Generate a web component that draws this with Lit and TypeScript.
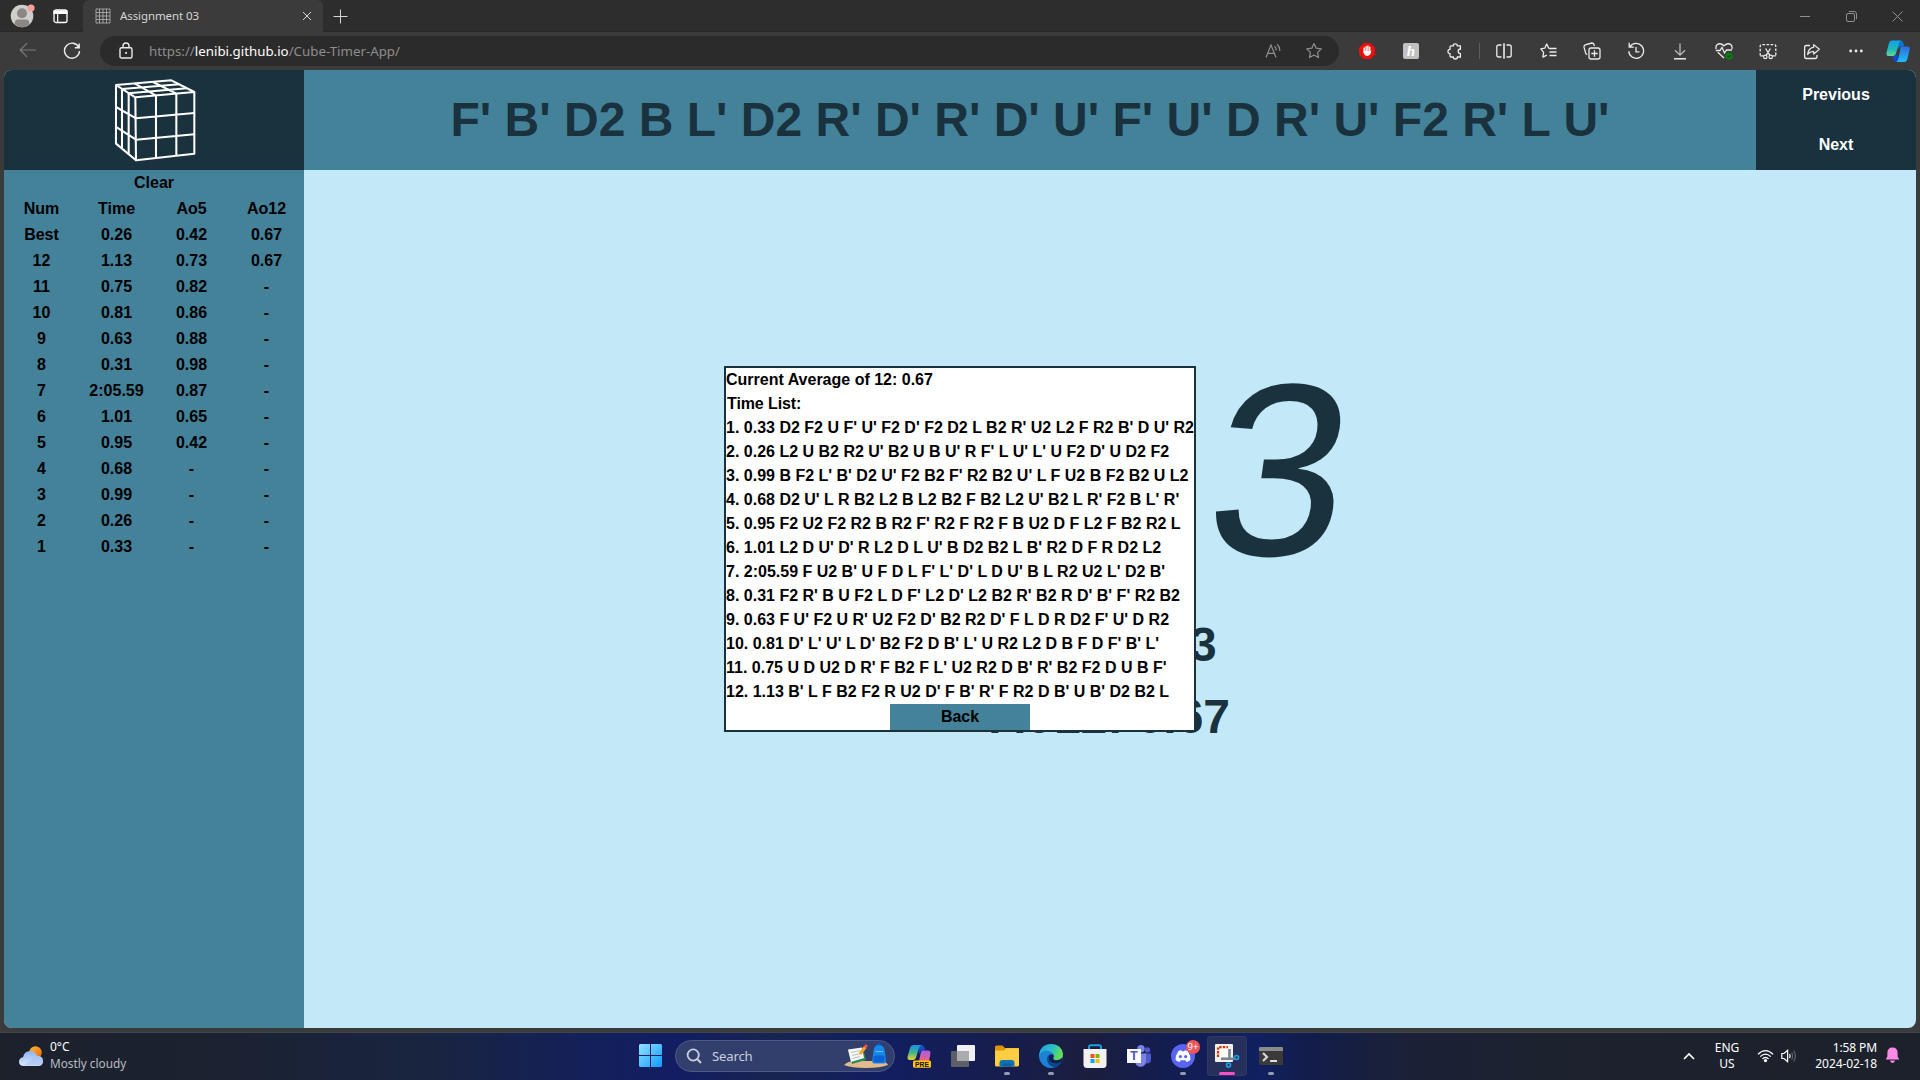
import { LitElement, html, css, svg } from "lit";
import { customElement } from "lit/decorators.js";

const SCRAMBLE = "F' B' D2 B L' D2 R' D' R' D' U' F' U' D R' U' F2 R' L U'";

const ROWS: string[][] = [
  ["Num", "Time", "Ao5", "Ao12"],
  ["Best", "0.26", "0.42", "0.67"],
  ["12", "1.13", "0.73", "0.67"],
  ["11", "0.75", "0.82", "-"],
  ["10", "0.81", "0.86", "-"],
  ["9", "0.63", "0.88", "-"],
  ["8", "0.31", "0.98", "-"],
  ["7", "2:05.59", "0.87", "-"],
  ["6", "1.01", "0.65", "-"],
  ["5", "0.95", "0.42", "-"],
  ["4", "0.68", "-", "-"],
  ["3", "0.99", "-", "-"],
  ["2", "0.26", "-", "-"],
  ["1", "0.33", "-", "-"],
];

const SOLVES: string[] = [
  "1. 0.33 D2 F2 U F' U' F2 D' F2 D2 L B2 R' U2 L2 F R2 B' D U' R2",
  "2. 0.26 L2 U B2 R2 U' B2 U B U' R F' L U' L' U F2 D' U D2 F2",
  "3. 0.99 B F2 L' B' D2 U' F2 B2 F' R2 B2 U' L F U2 B F2 B2 U L2",
  "4. 0.68 D2 U' L R B2 L2 B L2 B2 F B2 L2 U' B2 L R' F2 B L' R'",
  "5. 0.95 F2 U2 F2 R2 B R2 F' R2 F R2 F B U2 D F L2 F B2 R2 L",
  "6. 1.01 L2 D U' D' R L2 D L U' B D2 B2 L B' R2 D F R D2 L2",
  "7. 2:05.59 F U2 B' U F D L F' L' D' L D U' B L R2 U2 L' D2 B'",
  "8. 0.31 F2 R' B U F2 L D F' L2 D' L2 B2 R' B2 R D' B' F' R2 B2",
  "9. 0.63 F U' F2 U R' U2 F2 D' B2 R2 D' F L D R D2 F' U' D R2",
  "10. 0.81 D' L' U' L D' B2 F2 D B' L' U R2 L2 D B F D F' B' L'",
  "11. 0.75 U D U2 D R' F B2 F L' U2 R2 D B' R' B2 F2 D U B F'",
  "12. 1.13 B' L F B2 F2 R U2 D' F B' R' F R2 D B' U B' D2 B2 L",
];

const icon = (w: number, h: number, body: unknown) =>
  html`<svg width=${w} height=${h} viewBox="0 0 ${w} ${h}" fill="none" stroke="currentColor" stroke-width="1.2">${body}</svg>`;

/* ---------- browser window ---------- */

@customElement("browser-tabs")
export class BrowserTabs extends LitElement {
  static styles = css`
    :host { display: flex; height: 32px; background: #2d2d2d; color: #d6d6d6; font: 12px/32px "Noto Sans", sans-serif; box-shadow: inset 0 -1px #272727; }
    svg { display: block; }
    .profile { width: 44px; padding-top: 4px; box-sizing: border-box; padding-left: 10px; }
    .actions { width: 39px; padding: 9px 0 0 9px; box-sizing: border-box; color: #fff; }
    .tab { width: 240px; box-sizing: border-box; display: flex; align-items: center; padding: 0 11px 0 12px; background: #3b3b3b; border-radius: 6px 6px 0 0; }
    .title { flex: 1; margin-left: 9px; font-size: 11.5px; letter-spacing: -0.1px; }
    .plus { padding: 9px 0 0 10px; }
    .win { margin-left: auto; display: flex; align-items: center; color: #909090; }
    .win > span { width: 46px; display: flex; justify-content: center; }
  `;
  render() {
    return html`
      <div class="profile">${icon(26, 24, svg`
        <g stroke="none"><circle cx="12" cy="12" r="11.3" fill="#d0cecb"/><circle cx="12" cy="9.3" r="5" fill="#8b8784"/>
        <path d="M4.7 20.5 Q4.5 15.6 8 15.6 H16 Q19.5 15.6 19.3 20.5 Q12 26 4.7 20.5Z" fill="#8b8784"/>
        <circle cx="21" cy="4" r="3.6" fill="#fb9f9b"/></g>`)}</div>
      <div class="actions">${icon(15, 15, svg`<rect x="1" y="1" width="13" height="12.5" rx="2" stroke-width="1.3"/><path d="M1 2 H14 V4.5 H1Z" fill="currentColor"/><path d="M4.7 4 V13.5"/>`)}</div>
      <div class="tab">
        ${icon(16, 16, svg`<path d="M1 1 H15 V15 H1Z M4.5 1 V15 M8 1 V15 M11.5 1 V15 M1 4.5 H15 M1 8 H15 M1 11.5 H15" stroke="#a9a9a9" stroke-width=".9"/>`)}
        <span class="title">Assignment 03</span>
        ${icon(10, 10, svg`<path d="M1 1 L9 9 M9 1 L1 9" stroke-width="1"/>`)}
      </div>
      <div class="plus">${icon(15, 15, svg`<path d="M7.5 .5 V14.5 M.5 7.5 H14.5" stroke-width="1"/>`)}</div>
      <div class="win">
        <span>${icon(10, 10, svg`<path d="M0 5.5 H10" stroke-width="1"/>`)}</span>
        <span>${icon(11, 11, svg`<rect x=".5" y="2.5" width="8" height="8" rx="1.5" stroke-width="1"/><path d="M2.8 .5 H8 Q10.5 .5 10.5 3 V8.2" stroke-width="1"/>`)}</span>
        <span>${icon(11, 11, svg`<path d="M.5 .5 L10.5 10.5 M10.5 .5 L.5 10.5" stroke-width="1"/>`)}</span>
      </div>`;
  }
}

@customElement("browser-toolbar")
export class BrowserToolbar extends LitElement {
  static styles = css`
    :host { display: flex; align-items: center; height: 38px; background: #3b3b3b; color: #ececec; }
    svg { display: block; }
    .nav { width: 100px; display: flex; padding-left: 6px; box-sizing: border-box; }
    .nav > span, .cell { width: 44px; display: flex; justify-content: center; }
    .address { width: 1239px; height: 30px; box-sizing: border-box; border-radius: 15px; background: #2b2b2b; display: flex; align-items: center; padding: 0 16px 0 19px; }
    .url { flex: 1; margin-left: 16px; font: 13.3px/30px "Noto Sans", sans-serif; color: #8e8e8e; }
    .url b { font-weight: 400; color: #fff; }
    .dim { color: #8f8f8f; display: flex; gap: 23px; align-items: center; }
    .tools { display: flex; align-items: center; margin-left: 6px; }
    .sep { width: 1px; height: 16px; background: #5d5d5d; margin: 0 2px; }
    .last { width: 40px; }
    .honey { width: 16px; height: 16px; background: #c1c1c1; border-radius: 2px; color: #fff; font: italic 700 15px/16px "Liberation Serif", serif; text-align: center; }
  `;
  render() {
    const c = (w: number, h: number, body: unknown) => html`<span class="cell">${icon(w, h, body)}</span>`;
    return html`
      <div class="nav">
        <span>${icon(18, 16, svg`<path d="M17 8 H1.5 M8 1.2 L1.2 8 L8 14.8" stroke="#7b7b7b"/>`)}</span>
        <span>${icon(18, 18, svg`<path d="M15.8 5.5 A7.5 7.5 0 1 0 16.5 9 M16.2 1.5 V5.8 H11.8" stroke-width="1.4"/>`)}</span>
      </div>
      <div class="address">
        ${icon(14, 18, svg`<rect x="1" y="5.8" width="12" height="10.2" rx="1.6" stroke-width="1.4"/><path d="M4 5.6 V4 A3 3 0 0 1 10 4 V5.6" stroke-width="1.4"/><rect x="6.2" y="10" width="1.8" height="1.8" fill="currentColor" stroke="none"/>`)}
        <span class="url">https://<b>lenibi.github.io</b>/Cube-Timer-App/</span>
        <span class="dim">
          ${icon(17, 16, svg`<path d="M1 14.5 L6 2 L11 14.5 M2.8 10.3 H9.2 M9.5 3.3 Q11.3 4.8 11.2 7.5 M12 1.2 Q15.2 4 14.7 8"/>`)}
          ${icon(18, 18, svg`<path d="M9 1.6 L11.2 6.2 L16.3 6.9 L12.6 10.4 L13.5 15.6 L9 13.1 L4.5 15.6 L5.4 10.4 L1.7 6.9 L6.8 6.2Z" stroke-linejoin="round"/>`)}
        </span>
      </div>
      <div class="tools">
        ${c(16, 16, svg`<path d="M4.7 0 H11.3 L16 4.7 V11.3 L11.3 16 H4.7 L0 11.3 V4.7Z" fill="#ee0d0d" stroke="none"/><path d="M5.2 5 V9.5 M7.1 3.4 V9 M8.9 3 V9 M10.7 4.2 V10" stroke="#fff" stroke-width="1.4" stroke-linecap="round"/><path d="M4.5 8 H11.4 L12.4 7.3 Q11.8 12.8 8.3 12.9 Q4.5 12.8 4.5 8Z" fill="#fff" stroke="none"/>`)}
        <span class="cell"><span class="honey">h</span></span>
        ${c(16, 17, svg`<path d="M4 2.8 H6.3 Q6.3 .8 8.3 .8 Q10.3 .8 10.3 2.8 H13.4 V6 Q11.2 6 11.2 8.3 Q11.2 10.6 13.4 10.6 V14 H10.4 Q10.4 16 8.4 16 Q6.3 16 6.3 14 H4 Q3 14 3 13 V10.6 Q1 10.6 1 8.5 Q1 6.4 3 6.4 V4 Q3 2.8 4 2.8Z" stroke-width="1.3"/>`)}
        <span class="sep"></span>
        ${c(16, 16, svg`<path d="M5.5 2 H2.8 Q.8 2 .8 4 V12 Q.8 14 2.8 14 H5.5 M10.5 2 H13.2 Q15.2 2 15.2 4 V12 Q15.2 14 13.2 14 H10.5" stroke-width="1.3"/><path d="M8 .2 V15.8" stroke-width="1.6"/>`)}
        ${c(17, 16, svg`<path d="M11 5.8 L8.7 5.2 L6.7 1 L4.7 5.2 L.8 5.8 L3.6 9.4 L2.9 14.2 L6.8 12.2 M10 5.5 H16.5 M9.5 9 H16.5 M9.5 12.5 H16.5" stroke-width="1.3" stroke-linejoin="round"/>`)}
        ${c(18, 18, svg`<rect x="6" y="6" width="11" height="11" rx="2" stroke-width="1.3"/><path d="M11.5 8.3 V14.7 M8.3 11.5 H14.7 M4.2 12.6 L2.8 11.7 L1 5.2 Q.8 3.5 2.2 2.8 L8.7 1 Q10.6 1 11 2.5 L11.5 4" stroke-width="1.3"/>`)}
        ${c(18, 18, svg`<path d="M3 4.8 A7.4 7.4 0 1 1 1.8 9.2 M2.2 .8 V5.2 H6.8 M9 5 V9.8 H12.4" stroke-width="1.3"/>`)}
        ${c(14, 17, svg`<path d="M7 .5 V12 M2 7.3 L7 12.2 L12 7.3" stroke="#b9b9b9" stroke-width="1.3"/><path d="M1 15.8 H13" stroke-width="1.5"/>`)}
        ${c(18, 18, svg`<path d="M1.2 7 Q.4 4.6 2 2.8 Q5.2 .2 9 3.8 Q12.8 .2 16 2.8 Q17.6 4.6 16.8 7 M.8 8.5 H5 L7 5.3 L9.5 11 L11.5 8 H17 M2.8 10.2 L9 16" stroke-width="1.3"/><circle cx="14" cy="14.2" r="3.6" fill="#0f7b0f" stroke="none"/><path d="M12.3 14.3 L13.5 15.4 L15.7 13" stroke="#073b07" stroke-width="1"/>`)}
        ${c(18, 17, svg`<path d="M1.2 12.5 V3 Q1.2 1.6 2.6 1.6 H15.4 Q16.8 1.6 16.8 3 V12.5" stroke-dasharray="2.6 1.5" stroke-width="1.3"/><path d="M1.2 12.8 H4.5 M13.5 12.8 H16.8 M6.6 5.5 L10.8 12.3 M11.4 5.5 L7.2 12.3" stroke-width="1.3"/><circle cx="6.3" cy="13.9" r="1.7"/><circle cx="11.7" cy="13.9" r="1.7"/>`)}
        ${c(18, 17, svg`<path d="M7 2.5 H3.5 Q1.6 2.5 1.6 4.5 V13.5 Q1.6 15.5 3.5 15.5 H12 Q14 15.5 14 13.5 V12" stroke-width="1.3"/><path d="M10.7 1.6 L16.4 6.3 L10.7 11 V8.5 Q6.7 8.4 4.6 11.5 Q5.2 5.3 10.7 4.2Z" stroke-width="1.2" stroke-linejoin="round"/>`)}
        ${c(16, 4, svg`<g fill="currentColor" stroke="none"><circle cx="2.7" cy="2" r="1.4"/><circle cx="8" cy="2" r="1.4"/><circle cx="13.3" cy="2" r="1.4"/></g>`)}
        <span class="cell last">${html`<svg width="24" height="23" viewBox="0 0 24 23">
          <defs>
            <linearGradient id="a" x1="0" y1="0" x2="0" y2="1"><stop offset="0" stop-color="#13a0ee"/><stop offset=".55" stop-color="#1bb9b9"/><stop offset="1" stop-color="#66d98d"/></linearGradient>
            <linearGradient id="b" x1="0" y1="0" x2="0" y2="1"><stop offset="0" stop-color="#2f6bd9"/><stop offset="1" stop-color="#1bc0f8"/></linearGradient>
          </defs>
          <path d="M6 15 H12 L12.5 21.8 H10 Q7.8 21.8 7 19Z" fill="#1545c9"/>
          <path d="M12 .5 H14.5 Q17 .5 17.8 4.5 L18.3 6.5 H15 Q13 6.5 12 10Z" fill="#0f74cf"/>
          <path d="M5.5 .5 H14.5 Q13.2 2 12.3 5.5 L10.3 12.5 Q9.3 16 6.5 16 H2.5 Q0 16 .5 12.5 L3 3 Q3.8 .5 5.5 .5Z" fill="url(#a)"/>
          <path d="M15 6.4 H21.5 Q24.2 6.4 23.7 9.5 L21.5 18.5 Q20.5 22 18.5 22 H10.3 Q11.8 21 12.5 18 L14 11 Q14.2 8 15 6.4Z" fill="url(#b)"/>
        </svg>`}</span>
      </div>`;
  }
}

/* ---------- cube timer page ---------- */

@customElement("solve-sidebar")
export class SolveSidebar extends LitElement {
  static styles = css`
    :host { display: flex; flex-direction: column; width: 300px; background: #44829a; font: 700 16px/26px "Liberation Sans", Arial, sans-serif; color: #000; text-align: center; }
    .logo { height: 100px; background: #19323e; display: flex; align-items: center; justify-content: center; }
    .clear { height: 26px; line-height: 25px; }
    .row { display: grid; grid-template-columns: repeat(4, 75px); height: 26px; line-height: 25px; }
  `;
  render() {
    return html`
      <div class="logo">
        <svg width="83.33" height="86.67" viewBox="336 230 250 260" fill="none" stroke="#fff" stroke-width="6.2" stroke-linejoin="round">
          <path d="M406 291 L583 275 V460 L408 480Z M406 291 L348 254 V430 L408 480 M348 254 L514 240 L583 275"/>
          <path d="M468 286 V473 M529 280 V466 M408 354 L583 338 M408 418 L583 402"/>
          <path d="M366 265 V445 M386 278 V462 M348 320 L408 354 M348 380 L408 418"/>
          <path d="M366 266 L538 252 M386 279 L561 264 M404 249 L468 286 M459 245 L529 280"/>
        </svg>
      </div>
      <div class="clear">Clear</div>
      ${ROWS.map((r) => html`<div class="row">${r.map((v) => html`<span>${v}</span>`)}</div>`)}`;
  }
}

@customElement("average-dialog")
export class AverageDialog extends LitElement {
  static styles = css`
    :host { display: block; box-sizing: border-box; width: 472px; height: 366px; border: 2px solid #19323e; background: #fff; color: #000; font: 700 16px/24px "Liberation Sans", Arial, sans-serif; white-space: nowrap; }
    .back { width: 140px; height: 26px; line-height: 25px; margin: 0 auto; background: #44829a; text-align: center; }
    .label { padding-left: 1px; letter-spacing: -0.1px; }
  `;
  render() {
    return html`
      <div>Current Average of 12: 0.67</div>
      <div class="label">Time List:</div>
      ${SOLVES.map((s) => html`<div>${s}</div>`)}
      <div class="back">Back</div>`;
  }
}

@customElement("cube-timer")
export class CubeTimer extends LitElement {
  static styles = css`
    :host { display: flex; height: 958px; border-radius: 8px; overflow: hidden; background: #c3e8f7; font-family: "Liberation Sans", Arial, sans-serif; font-weight: 700; color: #19323e; }
    .body { flex: 1; display: flex; flex-direction: column; }
    .head { display: flex; height: 100px; }
    .scramble { flex: 1; background: #44829a; font-size: 48px; line-height: 99px; text-align: center; white-space: nowrap; }
    .buttons { width: 160px; display: flex; flex-direction: column; background: #19323e; color: #fff; font-size: 16px; line-height: 49px; text-align: center; }
    .buttons > span { height: 50px; }
    .main { flex: 1; padding-top: 158px; text-align: center; font-size: 48px; line-height: 72px; }
    .time { font-size: 246px; line-height: 283px; height: 281px; font-weight: 400; transform: skewX(-8deg); }
  `;
  render() {
    return html`
      <solve-sidebar></solve-sidebar>
      <div class="body">
        <div class="head">
          <div class="scramble">${SCRAMBLE}</div>
          <div class="buttons"><span>Previous</span><span>Next</span></div>
        </div>
        <div class="main">
          <div class="time">1.13</div>
          <div>Ao5: 0.73</div>
          <div>Ao12: 0.67</div>
        </div>
      </div>`;
  }
}

/* ---------- desktop taskbar ---------- */

@customElement("task-bar")
export class TaskBar extends LitElement {
  static styles = css`
    :host { display: grid; grid-template-columns: 628px 665px 1fr; height: 48px; box-sizing: border-box; border-top: 1px solid #41454e; color: #fff; font: 12px/16px "Noto Sans", sans-serif;
      background: linear-gradient(90deg, #1c212c 0, #1b2230 200px, #192440 430px, #14205a 590px, #121d63 680px, #182450 770px, #111e60 880px, #161d50 980px, #1a1e3e 1090px, #131d54 1180px, #102060 1260px, #131d4a 1310px, #1a2138 1400px, #1c222e 1540px, #1c212b 1920px); }
    svg { display: block; }
    .weather { display: flex; padding: 6px 0 0 19px; gap: 7px; }
    .weather svg { margin-top: 7px; }
    .sub { color: #b9bcc3; font-size: 11.8px; }
    .center { display: flex; align-items: center; padding-bottom: 2px; }
    .cell { position: relative; width: 44px; height: 40px; display: flex; align-items: center; justify-content: center; }
    .cell.start { margin-right: 3px; }
    .search { width: 220px; height: 32px; box-sizing: border-box; border: 1px solid #4c5786; border-radius: 16px; background: #323e6c; margin-right: 2px; display: flex; align-items: center; padding: 0 5px 0 10px; font-size: 13.2px; color: #c9cede; }
    .search > span { flex: 1; margin-left: 10px; letter-spacing: -0.2px; }
    .open { width: 40px; margin: 0 2px; background: #26305a; border-radius: 4px; box-shadow: inset 0 0 0 1px #2d3865; }
    .mark { position: absolute; bottom: 1px; left: 50%; width: 6px; height: 3px; margin-left: -3px; border-radius: 2px; background: #959bb0; }
    .mark.on { width: 16px; margin-left: -8px; background: #ff4fc4; }
    .badge { position: absolute; left: 25px; top: 4px; width: 14px; height: 14px; border-radius: 7px; background: #f0555a; font: 9.5px/14px "Noto Sans", sans-serif; text-align: center; }
    .tray { display: flex; align-items: center; justify-content: flex-end; padding: 0 20px 2px 0; }
    .lang { text-align: center; width: 30px; margin: 0 15px 0 17px; }
    .clock { text-align: right; width: 70px; margin: 0 8px 0 9px; white-space: nowrap; letter-spacing: -0.1px; }
  `;
  render() {
    const mark = html`<span class="mark"></span>`;
    return html`
      <div class="weather">
        <svg width="24" height="21" viewBox="0 0 24 21">
          <defs><linearGradient id="s" x1="0" y1="0" x2="1" y2="1"><stop offset="0" stop-color="#fcc02a"/><stop offset="1" stop-color="#ef5f10"/></linearGradient>
          <linearGradient id="c" x1="0" y1="0" x2="0" y2="1"><stop offset="0" stop-color="#8fb5f5"/><stop offset="1" stop-color="#dbe8fb"/></linearGradient></defs>
          <circle cx="16.5" cy="6.5" r="6.3" fill="url(#s)"/>
          <path d="M5 20 Q0 20 0 15.8 Q0 12 4 11.2 Q5.5 5 11 5 Q16.5 5 18 10 Q24 9.8 24 15 Q24 20 19 20Z" fill="url(#c)"/>
          <path d="M12 14 Q14 9.7 18.5 9.8 Q24 10 24 15 Q24 19.6 19 19.6 H5" fill="#a6c2f2" opacity=".6"/>
        </svg>
        <div><div>0°C</div><div class="sub">Mostly cloudy</div></div>
      </div>
      <div class="center">
        <div class="cell start">
          <svg width="23" height="23" viewBox="0 0 23 23"><defs><linearGradient id="w" x1="0" y1="0" x2="1" y2="1"><stop offset="0" stop-color="#93e2ff"/><stop offset="1" stop-color="#0d9bff"/></linearGradient></defs>
          <path d="M1 0 H11 V11 H0 V1Z M12 0 H22 L23 1 V11 H12Z M0 12 H11 V23 H1 L0 22Z M12 12 H23 V22 L22 23 H12Z" fill="url(#w)"/></svg>
        </div>
        <div class="search">
          ${icon(16, 16, svg`<circle cx="7.2" cy="7" r="5.6" stroke-width="1.8"/><path d="M11.2 11 L15 15" stroke-width="2"/>`)}
          <span>Search</span>
          <svg width="46" height="26" viewBox="0 0 46 26">
            <path d="M1 22 Q5 18 12 18 H38 Q44 19 45 22 Q38 25 23 25 Q8 25 1 22Z" fill="#e2bb8c"/>
            <path d="M5 8 L20 5 L23 17 L9 21Z" fill="#2f8b55"/><path d="M5 6.5 L19 4.5 L21 15 L8 19Z" fill="#f6f7f3"/><path d="M8 9.5 L17 7.5 M9 12.5 L18 10.5 M9.5 15.5 L17 13.5" stroke="#b9c2bd"/>
            <path d="M17 11 L22.3 4" stroke="#ffa028" stroke-width="3"/><path d="M22 4.4 L23.8 2" stroke="#e2515b" stroke-width="3"/>
            <path d="M33.5 4 Q33.5 1 36 1 Q38.5 1 38.5 4" stroke="#1153b4" stroke-width="1.6" fill="none"/>
            <path d="M30.5 8 Q31 2 36 2 Q41 2 41.8 8 L43 18 Q43 20.5 41 20.5 H31 Q29 20.5 29.2 18Z" fill="#1588f0"/><rect x="30.5" y="12.5" width="11" height="7" rx="2" fill="#0a63d2"/><path d="M32.5 8.5 H40" stroke="#74c4ff"/>
          </svg>
        </div>
        <div class="cell">
          <svg width="24" height="24" viewBox="0 0 24 24"><defs>
            <linearGradient id="p" x1="0" y1="0" x2="0" y2="1"><stop offset="0" stop-color="#1a8fe8"/><stop offset=".5" stop-color="#3fb58e"/><stop offset="1" stop-color="#f0cf2c"/></linearGradient>
            <linearGradient id="q" x1="0" y1="0" x2="0" y2="1"><stop offset="0" stop-color="#a55ce8"/><stop offset="1" stop-color="#f0647a"/></linearGradient></defs>
            <path d="M11 1 H15 Q17 1 18 6 H15 Q13 7 12 10Z" fill="#154fc4"/>
            <path d="M6 1 H14 Q12 3 11 7 L9.5 12 Q8.5 16 6 16 H3 Q0 16 .6 12.5 L3 4 Q4 1 6 1Z" fill="url(#p)"/>
            <path d="M15 6.5 H21 Q24 6.5 23.4 10 L22 17 H12 L13.5 10 Q14 7 15 6.5Z" fill="url(#q)"/>
            <rect x="6" y="16.5" width="18" height="7.3" rx="1.5" fill="#ffc512"/>
            <text x="15" y="22.7" font-size="6.8" font-weight="700" text-anchor="middle" fill="#15110a" font-family="Liberation Sans">PRE</text></svg>
        </div>
        <div class="cell">
          <svg width="24" height="22" viewBox="0 0 24 22"><rect x="6" y="0" width="18" height="16" rx="1" fill="#f0f0f2"/><rect x="0" y="6" width="18" height="16" rx="1" fill="#5d5f66"/><rect x="6" y="6" width="12" height="10" fill="#ababad"/></svg>
        </div>
        <div class="cell">
          <svg width="24" height="22" viewBox="0 0 24 22"><path d="M0 2 Q0 .5 1.5 .5 H7.5 L10 3 H22.5 Q24 3 24 4.5 V10 H0Z" fill="#dd9608"/><path d="M0 5.5 H9 L11 3.2 H24 V20 Q24 21.5 22.5 21.5 H1.5 Q0 21.5 0 20Z" fill="#ffcd41"/><path d="M4.5 21.5 V18 Q4.5 15 7.5 15 H16.5 Q19.5 15 19.5 18 V21.5Z" fill="#1272b8"/><path d="M7.5 21.5 V19.5 Q7.5 18.5 8.5 18.5 H15.5 Q16.5 18.5 16.5 19.5 V21.5Z" fill="#0d5f9e"/></svg>${mark}
        </div>
        <div class="cell">
          <svg width="24" height="24" viewBox="0 0 24 24"><defs><linearGradient id="e" x1="0" y1="0" x2="1" y2=".3"><stop offset="0" stop-color="#1e9de6"/><stop offset=".6" stop-color="#2ebfc2"/><stop offset="1" stop-color="#63dd53"/></linearGradient></defs>
            <circle cx="12" cy="12" r="12" fill="#1264b4"/>
            <path d="M.2 10 Q2 0 12 0 Q22.5 0 24 10 Q24 16 18 16.3 Q14 16.3 14.3 14.3 Q16 10.5 12.5 9 Q5 6.5 .2 13Z" fill="url(#e)"/>
            <path d="M0 12 Q3 6 9 7 Q13 7.5 13.5 10 Q8 9.5 8 15 Q8.5 21 14.5 23.6 Q6 25 2 18 Q.2 15 0 12Z" fill="#1b82d6"/>
            <path d="M9.5 13 Q9.5 19.5 16 20 Q20 20 22.5 18 Q20.5 21.5 17 23 Q8 22 8.3 15.5 Q8.5 11 12.5 10.5 Q9.7 11.5 9.5 13Z" fill="#0b4788"/>
            <path d="M13.8 10.3 Q15.3 12 14.2 14.2 Q14 16.3 18 16.3 Q21.3 16.2 23.2 13.8 L22.8 17.6 Q20.3 20 16 19.6 Q9.7 19 9.7 13.2 Q10.4 10.2 13.8 10.3Z" fill="#141d50"/></svg>${mark}
        </div>
        <div class="cell">
          <svg width="24" height="24" viewBox="0 0 24 24"><path d="M6 6 V3 Q6 1.3 7.7 1.3 H16.3 Q18 1.3 18 3 V6" fill="none" stroke="#1ba0e8" stroke-width="1.9"/><path d="M.5 5 H23.5 V20.5 Q23.5 24 20 24 H4 Q.5 24 .5 20.5Z" fill="#f1f1f1"/><path d="M7.5 10 H11.5 V14 H7.5Z" fill="#f25022"/><path d="M12.5 10 H16.5 V14 H12.5Z" fill="#7fba00"/><path d="M7.5 15 H11.5 V19 H7.5Z" fill="#00a4ef"/><path d="M12.5 15 H16.5 V19 H12.5Z" fill="#ffb900"/></svg>
        </div>
        <div class="cell">
          <svg width="24" height="22" viewBox="0 0 24 22"><circle cx="20.5" cy="5" r="2.7" fill="#5059c9"/><circle cx="14" cy="3.7" r="3.7" fill="#7b83eb"/><path d="M17 8.5 H24 V15 Q23.5 18.5 20 18.5 H17Z" fill="#5059c9"/><path d="M8 8.5 H19 V16 Q18.5 21.8 13.5 21.8 Q8.5 21.8 8 16Z" fill="#7b83eb"/><rect x="0" y="4" width="14" height="14" fill="#fbfbff"/><text x="7" y="15.2" font-size="12" font-weight="700" text-anchor="middle" fill="#4b53bc" font-family="Liberation Sans">T</text></svg>
        </div>
        <div class="cell">
          <svg width="24" height="24" viewBox="0 0 24 24"><circle cx="12" cy="12" r="12" fill="#5865f2"/><path d="M7.5 7 Q9 6.2 10.3 6.2 L10.8 7.2 H13.2 L13.7 6.2 Q15 6.2 16.8 7 Q19.8 11.5 19.4 16 Q17.7 17.5 15.4 17.9 L14.4 16.2 H9.6 L8.6 17.9 Q6.3 17.5 4.6 16 Q4.2 11.5 7.5 7Z" fill="#fff"/><circle cx="9.4" cy="12.6" r="1.6" fill="#5865f2"/><circle cx="14.6" cy="12.6" r="1.6" fill="#5865f2"/></svg>
          <span class="badge">9+</span>${mark}
        </div>
        <div class="cell open">
          <svg width="25" height="24" viewBox="0 0 25 24"><rect x="0" y="0" width="18" height="18" rx="1" fill="#f2efee"/><path d="M3.2 13 V3.2 H13" fill="none" stroke="#d83b01" stroke-width="2.6" stroke-dasharray="2.4 1.2"/><path d="M4.5 4.5 H13 V13 H4.5Z" fill="#fff"/><path d="M14.5 5 V16 M6 14.8 H19" stroke="#7d858c" stroke-width="2.6"/><circle cx="13.5" cy="21" r="2" fill="none" stroke="#1b9fe4" stroke-width="1.7"/><circle cx="21.5" cy="13.5" r="2" fill="none" stroke="#1b9fe4" stroke-width="1.7"/></svg>
          <span class="mark on"></span>
        </div>
        <div class="cell">
          <svg width="24" height="18" viewBox="0 0 24 18"><rect width="24" height="18" rx="1.3" fill="#3a3a3a"/><path d="M0 4 V1.3 Q0 0 1.3 0 H22.7 Q24 0 24 1.3 V4Z" fill="#8b8b8b"/><path d="M4 6 L8 10 L4 14" fill="none" stroke="#d5d5d5" stroke-width="2.2"/><path d="M11 14 H18" stroke="#fff" stroke-width="1.7"/></svg>${mark}
        </div>
      </div>
      <div class="tray">
        ${icon(12, 8, svg`<path d="M1 7 L6 2 L11 7" stroke-width="1.6"/>`)}
        <div class="lang">ENG<br />US</div>
        ${icon(17, 14, svg`<path d="M1 5.2 Q8.5 -2 16 5.2 M3.2 7.6 Q8.5 2.6 13.8 7.6 M5.4 9.9 Q8.5 7 11.6 9.9" stroke-width="1.3"/><circle cx="8.5" cy="11.6" r="1.6" fill="currentColor" stroke="none"/>`)}
        <svg width="24" height="14" viewBox="0 0 24 14" fill="none" stroke="#fff" stroke-width="1.2"><path d="M7.8 4.5 H10 L13.6 1.3 V12.7 L10 9.5 H7.8Z M15.5 5 Q16.7 7 15.5 9"/><path d="M17.5 3.3 Q20 7 17.5 10.7 M19.7 1.6 Q23 7 19.7 12.4" stroke="#5c606b"/></svg>
        <div class="clock">1:58 PM<br />2024-02-18</div>
        <svg width="15" height="17" viewBox="0 0 15 17" fill="#ff8ae6"><path d="M7.5 .5 Q12.6 .5 12.6 6 V9.5 L14.3 12.6 H.7 L2.4 9.5 V6 Q2.4 .5 7.5 .5Z M5 13.6 H10 Q9.6 16 7.5 16 Q5.4 16 5 13.6Z"/></svg>
      </div>`;
  }
}

@customElement("app-root")
export class AppRoot extends LitElement {
  static styles = css`
    :host { position: relative; display: flex; flex-direction: column; width: 1920px; height: 1080px; overflow: hidden; background: #3b3b3b; }
    .page { padding: 0 4px 4px; }
    .dialog { position: absolute; left: 724px; top: 366px; }
  `;
  render() {
    return html`
      <browser-tabs></browser-tabs>
      <browser-toolbar></browser-toolbar>
      <div class="page"><cube-timer></cube-timer></div>
      <task-bar></task-bar>
      <average-dialog class="dialog"></average-dialog>`;
  }
}
